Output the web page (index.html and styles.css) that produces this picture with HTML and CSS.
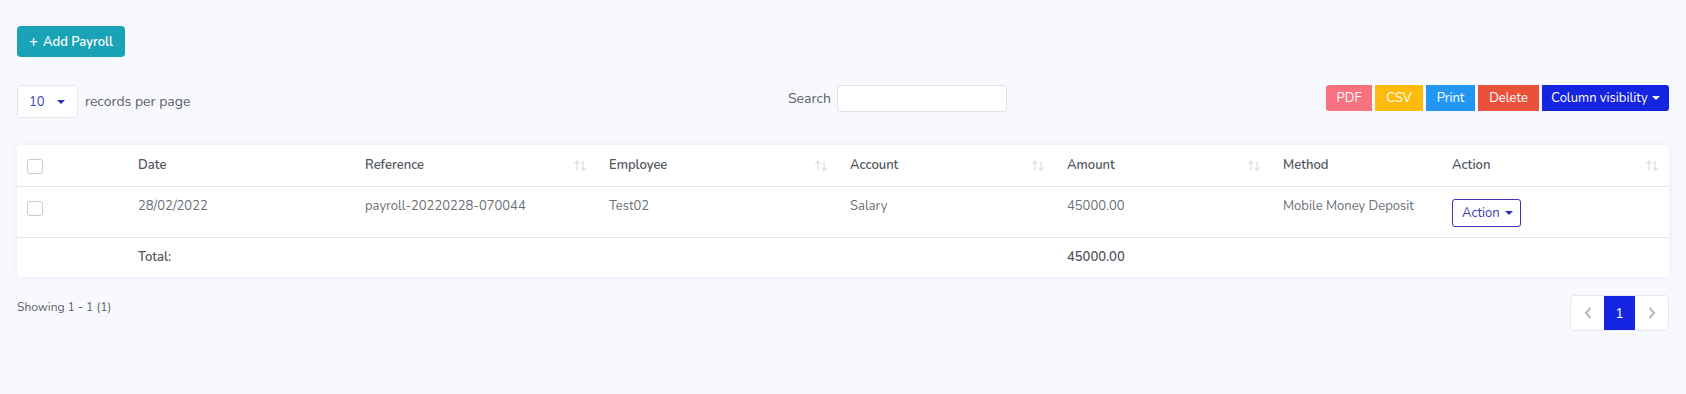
FILE: index.html
```html
<!DOCTYPE html>
<html lang="en">
  <head>
    <meta charset="UTF-8" />
    <title>Payroll</title>
    <link rel="stylesheet" href="styles.css">
  </head>
  <body>
    <div id="page">
      <button class="btn-add"><span class="plus">+</span>Add Payroll</button>

      <div class="toolbar">
        <div class="length">
          <div class="length-select">10 <span class="caret"></span></div>
          <span>records per page</span>
        </div>
        <div class="search">
          <label for="search-box">Search</label>
          <input type="text" id="search-box" />
        </div>
        <div class="export-buttons">
          <button class="btn btn-pdf">PDF</button>
          <button class="btn btn-csv">CSV</button>
          <button class="btn btn-print">Print</button>
          <button class="btn btn-delete">Delete</button>
          <button class="btn btn-colvis">Column visibility<span class="caret caret-white"></span></button>
        </div>
      </div>

      <div class="card">
        <table>
          <colgroup>
            <col style="width: 109px" />
            <col style="width: 227px" />
            <col style="width: 244px" />
            <col style="width: 241px" />
            <col style="width: 217px" />
            <col style="width: 216px" />
            <col style="width: 169px" />
            <col />
          </colgroup>
          <thead>
            <tr>
              <th><span class="check"></span></th>
              <th>Date</th>
              <th><div class="th-sort">Reference <span class="sort">&#8593;&#8595;</span></div></th>
              <th><div class="th-sort">Employee <span class="sort">&#8593;&#8595;</span></div></th>
              <th><div class="th-sort">Account <span class="sort">&#8593;&#8595;</span></div></th>
              <th><div class="th-sort">Amount <span class="sort">&#8593;&#8595;</span></div></th>
              <th>Method</th>
              <th><div class="th-sort">Action <span class="sort">&#8593;&#8595;</span></div></th>
            </tr>
          </thead>
          <tbody>
            <tr>
              <td><span class="check"></span></td>
              <td>28/02/2022</td>
              <td>payroll-20220228-070044</td>
              <td>Test02</td>
              <td>Salary</td>
              <td>45000.00</td>
              <td>Mobile Money Deposit</td>
              <td><button class="btn-action"><span>Action</span><span class="caret"></span></button></td>
            </tr>
          </tbody>
          <tfoot>
            <tr>
              <td></td>
              <td>Total:</td>
              <td></td>
              <td></td>
              <td></td>
              <td>45000.00</td>
              <td></td>
              <td></td>
            </tr>
          </tfoot>
        </table>
      </div>

      <div class="table-footer">
        <span class="showing">Showing 1 - 1 (1)</span>
        <ul class="pagination">
          <li class="page-item">
            <svg width="8" height="12" viewBox="0 0 8 12"><path d="M6 1.5 L2 6 L6 10.5" fill="none" stroke="#b5b9c0" stroke-width="2" stroke-linecap="round" stroke-linejoin="round"/></svg>
          </li>
          <li class="page-item active">1</li>
          <li class="page-item">
            <svg width="8" height="12" viewBox="0 0 8 12"><path d="M2 1.5 L6 6 L2 10.5" fill="none" stroke="#b5b9c0" stroke-width="2" stroke-linecap="round" stroke-linejoin="round"/></svg>
          </li>
        </ul>
      </div>
    </div>
  </body>
</html>
```

FILE: styles.css
```css
* {
  margin: 0;
  padding: 0;
  box-sizing: border-box;
}
html,
body {
  width: 100%;
  height: 100%;
  background-color: #f8f9fe;
}
#page {
  padding: 26px 17px 0 17px;
  font-family: "Nunito", Lato, "Open Sans", sans-serif;
  font-size: 14px;
  color: #5a5f66;
}
button {
  font-family: inherit;
  cursor: pointer;
}

.btn-add {
  background-color: #1aa2b7;
  color: white;
  border: none;
  border-radius: 4px;
  height: 31px;
  width: 108px;
  font-size: 13px;
  font-weight: 600;
  display: flex;
  align-items: center;
  justify-content: center;
}
.plus {
  font-size: 15px;
  margin-right: 5px;
  margin-top: 1px;
}

.toolbar {
  margin-top: 28px;
  display: grid;
  grid-template-columns: 771px 1fr auto;
  align-items: start;
}
.length {
  display: flex;
  align-items: center;
  gap: 7px;
}
.length-select {
  width: 61px;
  height: 33px;
  background: white;
  border: 1px solid #e5e7ee;
  border-radius: 3px;
  color: #3b3fc4;
  font-size: 13px;
  display: flex;
  align-items: center;
  justify-content: space-between;
  padding: 0 12px 0 11px;
}
.caret {
  display: inline-block;
  width: 0;
  height: 0;
  border-left: 4px solid transparent;
  border-right: 4px solid transparent;
  border-top: 4px solid #2a2fbf;
  vertical-align: middle;
}
.caret-white {
  border-top-color: white;
  margin-left: 4px;
  margin-top: -2px;
}

.search {
  display: flex;
  align-items: center;
  gap: 6px;
}
.search input {
  width: 170px;
  height: 27px;
  border: 1px solid #e1e4ec;
  border-radius: 3px;
  background: white;
}

.export-buttons {
  display: flex;
  gap: 3px;
}
.btn {
  border: none;
  color: white;
  font-size: 13px;
  height: 26px;
  padding: 0;
  border-radius: 0;
}
.btn-pdf {
  background-color: #f8727f;
  width: 46px;
  border-radius: 3px 0 0 3px;
}
.btn-csv {
  background-color: #ffbb0b;
  width: 48px;
}
.btn-print {
  background-color: #2196f3;
  width: 49px;
}
.btn-delete {
  background-color: #e9513b;
  width: 61px;
}
.btn-colvis {
  background-color: #1524e0;
  width: 127px;
  border-radius: 0 3px 3px 0;
  white-space: nowrap;
}

.card {
  margin-top: 27px;
  background: white;
  border-radius: 4px;
  box-shadow: 0 0 6px rgba(140, 150, 180, 0.12);
}
table {
  width: 100%;
  border-collapse: collapse;
  table-layout: fixed;
  font-size: 13px;
}
th,
td {
  text-align: left;
  padding: 0 12px 0 12px;
}
th {
  height: 41px;
  font-weight: 600;
  color: #525760;
  border-bottom: 1px solid #e3e5e9;
}
thead th:first-child,
tbody td:first-child {
  padding-left: 10px;
}
tbody td {
  height: 51px;
  vertical-align: top;
  padding-top: 10px;
  color: #6b7078;
  border-bottom: 1px solid #e3e5e9;
}
tfoot td {
  height: 40px;
  font-weight: 600;
  color: #525760;
}
.th-sort {
  display: flex;
  justify-content: space-between;
  align-items: center;
}
.sort {
  font-size: 11px;
  letter-spacing: -2px;
  color: #d6d8dc;
  font-weight: 400;
}
.check {
  display: inline-block;
  width: 16px;
  height: 15px;
  border: 1px solid #c9ccd1;
  border-radius: 3px;
  vertical-align: middle;
}
tbody .check {
  margin-top: 4px;
}
.btn-action {
  background: white;
  border: 1px solid #3b35b5;
  border-radius: 3px;
  color: #3b35b5;
  font-size: 13px;
  height: 28px;
  width: 69px;
  padding: 0 7px 0 9px;
  display: flex;
  align-items: center;
  justify-content: space-between;
  margin-top: 2px;
}

.table-footer {
  display: flex;
  justify-content: space-between;
  align-items: flex-start;
  margin-top: 18px;
}
.showing {
  font-size: 12px;
  padding-top: 4px;
  color: #5a5f66;
}
.pagination {
  list-style: none;
  display: flex;
  border: 1px solid #e6e8ee;
  border-radius: 4px;
  background: white;
  height: 36px;
}
.page-item {
  width: 33px;
  display: flex;
  align-items: center;
  justify-content: center;
}
.page-item.active {
  width: 31px;
  background-color: #1524e0;
  color: white;
  font-size: 14px;
}
```
